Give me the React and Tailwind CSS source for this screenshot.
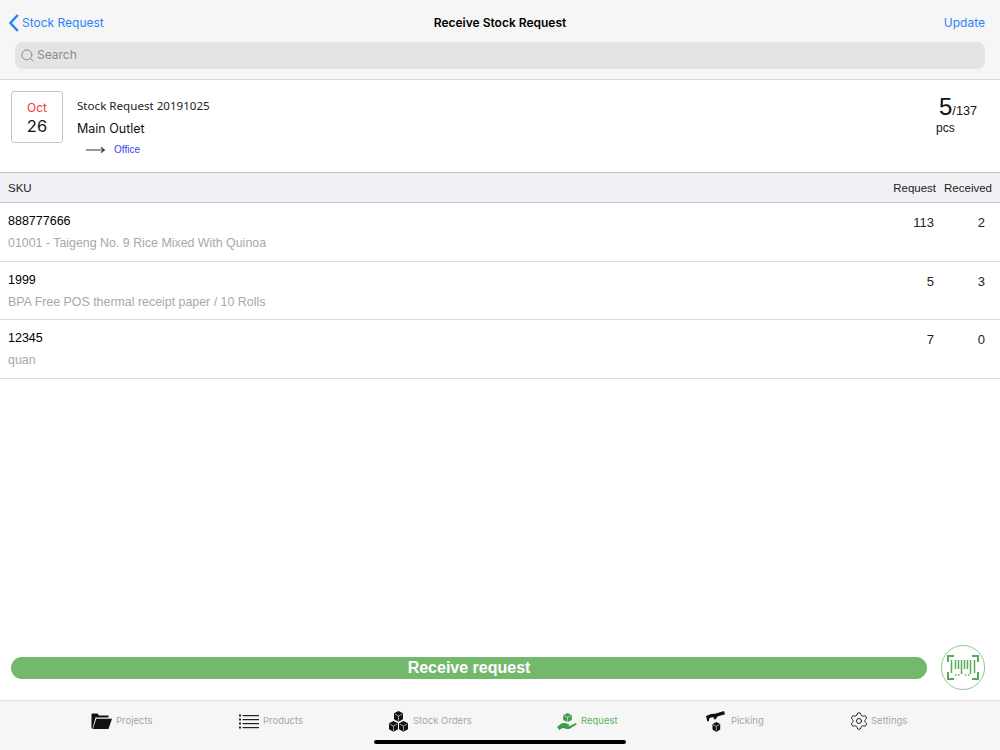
import { Search, Settings } from "lucide-react";

const ROWS = [
  { sku: "888777666", name: "01001 - Taigeng No. 9 Rice Mixed With Quinoa", request: 113, received: 2 },
  { sku: "1999", name: "BPA Free POS thermal receipt paper / 10 Rolls", request: 5, received: 3 },
  { sku: "12345", name: "quan", request: 7, received: 0 },
];

function FolderIcon() {
  return (
    <svg width="21" height="16" viewBox="0 0 21 16">
      <path d="M0.500 15.500V1.500Q0.500 0.500 1.500 0.500h5l1.500 2h9.500v2H4.500L1.500 15.500z" fill="#111" />
      <path d="M5.300 5.800H21L17.500 16H1.900z" fill="#111" />
    </svg>
  );
}

function ListIcon() {
  return (
    <svg width="20" height="15" viewBox="0 0 20 15" fill="#222">
      <rect x="0" y="0.500" width="2" height="2" />
      <rect x="0" y="4.500" width="2" height="2" />
      <rect x="0" y="8.500" width="2" height="2" />
      <rect x="0" y="12.500" width="2" height="2" />
      <rect x="3.500" y="1" width="16.500" height="1.200" />
      <rect x="3.500" y="5" width="16.500" height="1.200" />
      <rect x="3.500" y="9" width="16.500" height="1.200" />
      <rect x="3.500" y="13" width="16.500" height="1.200" />
    </svg>
  );
}

function Cube({ x, y }) {
  return (
    <g transform={`translate(${x} ${y})`}>
      <path d="M5 0l4.500 2.300v6L5 10.800.500 8.300v-6z" fill="#111" />
      <path d="M1.200 3L5 5l3.800-2M5 5v5" stroke="#f6f6f6" strokeWidth="0.600" fill="none" />
    </g>
  );
}

function CubesIcon() {
  return (
    <svg width="19" height="21" viewBox="0 0 19 21">
      <Cube x={4.500} y={0} />
      <Cube x={-0.500} y={10} />
      <Cube x={9.500} y={10} />
    </svg>
  );
}

function HandIcon() {
  return (
    <svg width="20" height="17" viewBox="0 0 20 17" fill="#3f9a4a">
      <path d="M10.500 0l4.300 2.200v4.700l-4.300 2.200-4.300-2.200V2.200z" />
      <path d="M6.800 2.500l3.700 1.900 3.700-1.900M10.500 4.400v4.500" stroke="#f6f6f6" strokeWidth="0.600" fill="none" />
      <path d="M0 14l4-3.200c1.500-1 3-1 4.500-.5l3 .8c1 .3.800 1.600-.3 1.600H8l4.800.2 5.500-2.600c1.200-.4 1.800.8.800 1.500l-6 3.700c-1 .5-2 .6-3 .4l-4.500-.8L2.300 17z" />
    </svg>
  );
}

function PickIcon() {
  return (
    <svg width="19" height="21" viewBox="0 0 19 21" fill="#111">
      <path d="M0 5l5-2 4-.3L18 0l1 3.200-7.500 2.400-2 2.900-1.700-.4-.5-2L3.500 7l-.8 3.500L1.200 10z" />
      <path d="M6.500 13l4-2 3.700 2v5.500L10.300 21l-3.800-2.500z" />
      <path d="M7 13.500l3.300 1.800 3.300-1.800M10.300 15.300v5" stroke="#f6f6f6" strokeWidth="0.600" fill="none" />
    </svg>
  );
}

function ScanIcon() {
  return (
    <svg width="32" height="25" viewBox="0 0 32 25" fill="none" stroke="#57ab57" className="mb-[1px]">
      <path d="M1 7V1h6M25 1h6v6M1 17v7h6M25 24h6v-7" strokeWidth="2" />
      <path d="M4.500 5v13M8.500 5v9M11.500 5v9M14.500 5v14M17.500 5v9M20.500 5v9M23.500 5v14M27.500 5v13" strokeWidth="1.500" />
      <path d="M8 20h1.500M11 20h1.500M18 20h1.500M21 20h1.500" strokeWidth="1.500" />
    </svg>
  );
}

const TABS = [
  { label: "Projects", icon: <FolderIcon />, width: "w-[148px]", gap: "gap-[4px]" },
  { label: "Products", icon: <ListIcon />, width: "w-[150px]", gap: "gap-[4px]" },
  { label: "Stock Orders", icon: <CubesIcon />, width: "w-[168px]", gap: "gap-[5px]" },
  { label: "Request", icon: <HandIcon />, width: "w-[149px]", gap: "gap-[4px]", active: true },
  { label: "Picking", icon: <PickIcon />, width: "w-[143px]", gap: "gap-[6px]" },
  { label: "Settings", icon: <Settings size={20} strokeWidth={1.200} color="#222" />, width: "w-[100px]", gap: "gap-[2px]" },
];

export default function App() {
  return (
    <div className="relative flex flex-col w-[1000px] h-[750px] bg-white overflow-hidden font-['Inter',sans-serif]">
      {/* Nav + search */}
      <div className="h-[80px] shrink-0 bg-[#f6f6f6] border-b border-[#d9d9d9] px-[15px]">
        <div className="relative flex items-center justify-between h-[42px] pt-[3px]">
          <div className="flex items-center -ml-[6px] text-[#2a84f6] text-[12px]">
            <svg width="10" height="18" viewBox="0 0 10 18" fill="none" stroke="#2a84f6" strokeWidth="2.400" className="mr-[3px]">
              <path d="M8.800 1L1.500 9l7.300 8" />
            </svg>
            <span>Stock Request</span>
          </div>
          <span className="absolute left-0 right-0 text-center text-[12px] font-semibold text-black">Receive Stock Request</span>
          <span className="text-[#2a84f6] text-[12px]">Update</span>
        </div>
        <div className="flex items-center gap-[2px] h-[27px] rounded-[8px] bg-[#e4e4e4] pl-[5px] pb-[1px] text-[12px] text-[#8b8b8b]">
          <Search size={15} strokeWidth={1.600} />
          <span>Search</span>
        </div>
      </div>

      {/* Request info */}
      <div className="h-[92px] shrink-0 flex pl-[11px] pr-[22px] pt-[11px]">
        <div className="w-[52px] h-[52px] border border-[#c4c4c4] rounded-[3px] pt-[2px] flex flex-col items-center justify-center shrink-0">
          <span className="text-[12px] leading-[16px] text-[#f4392d]">Oct</span>
          <span className="text-[16.500px] leading-[19px] mt-[1px] text-[#111]">26</span>
        </div>
        <div className="ml-[14px] flex-1">
          <p className="text-[11.600px] leading-[16px] mt-[7px] text-[#222] font-['Noto_Sans',sans-serif]">Stock Request 20191025</p>
          <p className="text-[12.500px] leading-[18px] mt-[6px] text-[#111]">Main Outlet</p>
          <div className="flex items-center mt-[5px] ml-[9px]">
            <svg width="19" height="8" viewBox="0 0 19 8" fill="none" stroke="#333" strokeWidth="1.100">
              <path d="M0 4h18M15 1.500L18.500 4 15 6.500" />
            </svg>
            <span className="ml-[9px] text-[10px] leading-[14px] text-[#3345f0] font-['Liberation_Sans',sans-serif]">Office</span>
          </div>
        </div>
        <div className="w-[48px] font-['Liberation_Sans',sans-serif] text-[#111]">
          <p className="leading-[28px] mt-[2px] pl-[9px] whitespace-nowrap">
            <span className="text-[24px]">5</span>
            <span className="text-[12.700px]">/137</span>
          </p>
          <p className="text-[12px] leading-[14px] pl-[6px] -mt-[4px]">pcs</p>
        </div>
      </div>

      {/* Table */}
      <div className="h-[31px] shrink-0 flex items-center justify-between bg-[#f1f1f5] border-y border-[#c3c3c3] pl-[8px] pr-[8px] pt-[2px] text-[11.500px] text-[#222] font-['Liberation_Sans',sans-serif]">
        <span>SKU</span>
        <div className="flex gap-[8px]">
          <span>Request</span>
          <span>Received</span>
        </div>
      </div>
      {ROWS.map((row) => (
        <div key={row.sku} className="h-[58.500px] shrink-0 flex justify-between border-b border-[#dcdcdc] pl-[8px] pr-[15px] pt-[10.400px] font-['Liberation_Sans',sans-serif]">
          <div>
            <p className="text-[12.500px] leading-[16px] text-black">{row.sku}</p>
            <p className="text-[12.400px] leading-[16px] mt-[6px] text-[#a8a8a8]">{row.name}</p>
          </div>
          <div className="flex text-[13px] leading-[20px] text-[#222]">
            <span className="text-right">{row.request}</span>
            <span className="w-[51px] text-right">{row.received}</span>
          </div>
        </div>
      ))}

      {/* Bottom action */}
      <div className="flex-1 flex items-end pb-[10px] pl-[11px] pr-[15px]">
        <button className="flex-1 h-[22px] mb-[11px] rounded-full bg-[#74b96b] text-white text-[16px] leading-[20px] font-bold font-['Liberation_Sans',sans-serif]">
          Receive request
        </button>
        <div className="ml-[14px] w-[44px] h-[45px] rounded-full border border-[#8fcb8f] flex items-center justify-center">
          <ScanIcon />
        </div>
      </div>

      {/* Tab bar */}
      <div className="h-[50px] shrink-0 bg-[#f6f6f6] border-t border-[#e2e2e2] flex items-start pl-[91px] pt-[10px]">
        {TABS.map((tab) => (
          <div key={tab.label} className={`flex items-center h-[20px] ${tab.gap} ${tab.width}`}>
            {tab.icon}
            <span className={`text-[9.500px] whitespace-nowrap ${tab.active ? "text-[#5fb05f]" : "text-[#a6a6a6]"}`}>{tab.label}</span>
          </div>
        ))}
      </div>

      {/* Home indicator */}
      <div className="absolute left-[374px] bottom-[6px] w-[252px] h-[4px] rounded-full bg-black" />
    </div>
  );
}
